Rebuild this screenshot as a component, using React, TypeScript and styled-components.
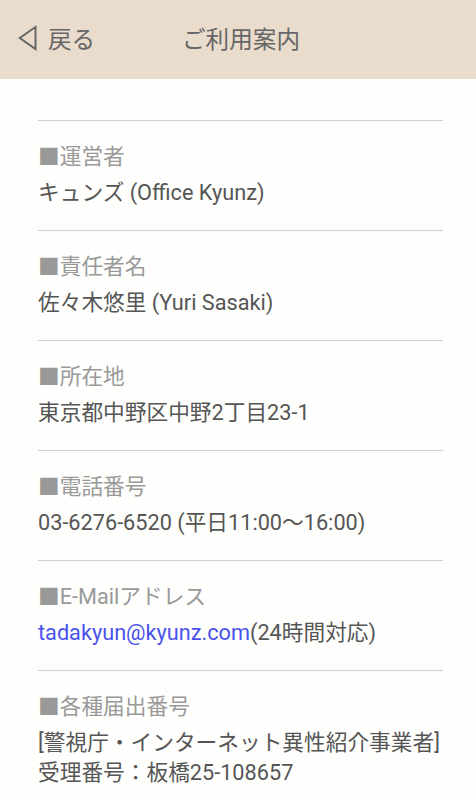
import React from "react";
import styled, { createGlobalStyle } from "styled-components";

const GlobalStyle = createGlobalStyle`
  body {
    margin: 0;
    background: #fefefc;
    font-family: Roboto, "Noto Sans CJK JP", sans-serif;
  }
`;

const Page = styled.div`
  width: 476px;
  min-height: 800px;
  background: #fefefc;
`;

const Header = styled.header`
  position: relative;
  height: 79px;
  background: #e9dccc;
  display: flex;
  align-items: center;
  justify-content: center;
  color: #666;
  font-size: 23.6px;
`;

const BackButton = styled.div`
  position: absolute;
  left: 18px;
  top: 0;
  bottom: 0;
  display: flex;
  align-items: center;
  gap: 11px;
  padding-bottom: 4px;
`;

const Title = styled.h1`
  margin: 0 0 4px 6px;
  font-size: 23.6px;
  font-weight: normal;
`;

const Content = styled.main`
  padding: 41px 33px 0 38px;
`;

const Section = styled.section`
  border-top: 1px solid #cfcfcf;
  padding: 18px 0 19px;
`;

const Label = styled.div`
  font-size: 21.7px;
  line-height: 36px;
  color: #999;
`;

const Value = styled.div<{ $multi?: boolean }>`
  font-size: 21.7px;
  line-height: ${(p) => (p.$multi ? "30px" : "36px")};
  padding-top: ${(p) => (p.$multi ? "3px" : "0")};
  color: #555;
  white-space: nowrap;
`;

const Mail = styled.a`
  color: #4a52ee;
  text-decoration: none;
`;

const BackIcon = () => (
  <svg width="19" height="26" viewBox="0 0 19 26">
    <path d="M17.5 2 L1.8 13 L17.5 24 Z" fill="none" stroke="#666" strokeWidth="2" />
  </svg>
);

const items: { label: string; value: React.ReactNode; multi?: boolean }[] = [
  { label: "■運営者", value: "キュンズ (Office Kyunz)" },
  { label: "■責任者名", value: "佐々木悠里 (Yuri Sasaki)" },
  { label: "■所在地", value: "東京都中野区中野2丁目23-1" },
  { label: "■電話番号", value: "03-6276-6520 (平日11:00〜16:00)" },
  {
    label: "■E-Mailアドレス",
    value: (
      <>
        <Mail href="mailto:tadakyun@kyunz.com">tadakyun@kyunz.com</Mail>(24時間対応)
      </>
    ),
  },
  {
    label: "■各種届出番号",
    value: (
      <>
        [警視庁・インターネット異性紹介事業者]
        <br />
        受理番号：板橋25-108657
      </>
    ),
    multi: true,
  },
];

export default function App() {
  return (
    <Page>
      <GlobalStyle />
      <Header>
        <BackButton>
          <BackIcon />
          <span>戻る</span>
        </BackButton>
        <Title>ご利用案内</Title>
      </Header>
      <Content>
        {items.map((it) => (
          <Section key={it.label}>
            <Label>{it.label}</Label>
            <Value $multi={it.multi}>{it.value}</Value>
          </Section>
        ))}
      </Content>
    </Page>
  );
}
